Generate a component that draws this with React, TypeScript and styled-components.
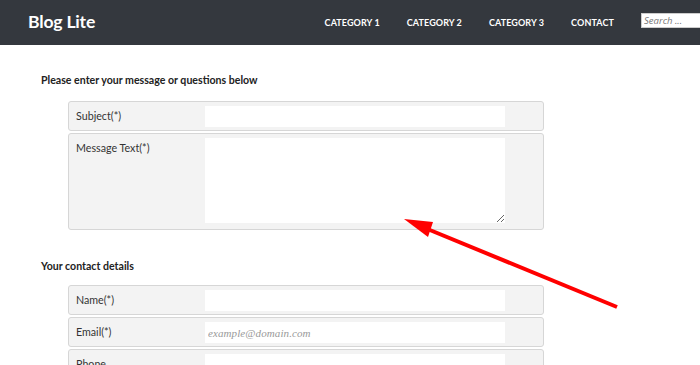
import React from "react";
import styled, { createGlobalStyle } from "styled-components";

const Global = createGlobalStyle`
  html, body { margin: 0; padding: 0; background: #fff; }
  body { font-family: Lato, "Open Sans", Arial, sans-serif; overflow: hidden; }
  * { box-sizing: border-box; }
`;

const Page = styled.div`
  position: relative;
  width: 700px;
  height: 365px;
  overflow: hidden;
`;

const Header = styled.header`
  height: 45px;
  background: #34383e;
  display: flex;
  align-items: center;
  padding-left: 28px;
  overflow: hidden;
`;

const Logo = styled.div`
  color: #fff;
  font-family: Lato, sans-serif;
  font-weight: 700;
  font-size: 17.6px;
  letter-spacing: -0.2px;
  margin-top: -2px;
  flex: 1;
`;

const Nav = styled.nav`
  display: flex;
  gap: 27px;
  margin-right: 27px;
`;

const NavItem = styled.a`
  color: #fff;
  font-family: Lato, sans-serif;
  font-weight: 700;
  font-size: 9px;
  text-transform: uppercase;
  text-decoration: none;
  letter-spacing: 0.1px;
`;

const Search = styled.input`
  width: 80px;
  height: 15px;
  margin-top: -4px;
  margin-right: -21px;
  border: 1px solid #ccc;
  background: #fff;
  padding: 0 2px;
  font-family: "Open Sans", sans-serif;
  font-size: 9.5px;
  font-style: italic;
  flex: none;
  &::placeholder { color: #777; }
`;

const Main = styled.main`
  padding: 28px 0 0 41px;
`;

const SectionTitle = styled.h3<{ $top?: number; $bottom?: number }>`
  margin: ${(p) => p.$top ?? 0}px 0 ${(p) => p.$bottom ?? 14}px 0;
  font-family: Lato, sans-serif;
  font-weight: 700;
  font-size: 10.6px;
  line-height: 14px;
  color: #222;
`;

const Rows = styled.div`
  margin-left: 27px;
  width: 476px;
  display: flex;
  flex-direction: column;
  gap: 2px;
`;

const Row = styled.div<{ $bottom?: number }>`
  display: flex;
  align-items: flex-start;
  background: #f3f3f3;
  border: 1px solid #d6d6d6;
  border-radius: 3px;
  padding: 4px 38px ${(p) => p.$bottom ?? 3}px 7px;
`;

const Label = styled.label`
  width: 129px;
  flex: none;
  font-family: Lato, sans-serif;
  font-size: 10.7px;
  line-height: 20px;
  color: #333;
`;

const Input = styled.input`
  width: 300px;
  height: 21px;
  border: none;
  background: #fff;
  padding: 0 3px;
  outline: none;
  font-family: "Liberation Serif", serif;
  font-style: italic;
  font-size: 11px;
  letter-spacing: 0.1px;
  &::placeholder { color: #999; }
`;

const TextArea = styled.textarea`
  width: 300px;
  height: 85px;
  border: none;
  background: #fff;
  padding: 0;
  outline: none;
  display: block;
`;

const Arrow = styled.svg`
  position: absolute;
  left: 0;
  top: 0;
  pointer-events: none;
`;

export default function App() {
  return (
    <Page>
      <Global />
      <Header>
        <Logo>Blog Lite</Logo>
        <Nav>
          <NavItem>Category 1</NavItem>
          <NavItem>Category 2</NavItem>
          <NavItem>Category 3</NavItem>
          <NavItem>Contact</NavItem>
        </Nav>
        <Search placeholder="Search ..." />
      </Header>
      <Main>
        <SectionTitle>Please enter your message or questions below</SectionTitle>
        <Rows>
          <Row>
            <Label>Subject(*)</Label>
            <Input />
          </Row>
          <Row $bottom={6}>
            <Label>Message Text(*)</Label>
            <TextArea />
          </Row>
        </Rows>
        <SectionTitle $top={29} $bottom={12}>Your contact details</SectionTitle>
        <Rows>
          <Row>
            <Label>Name(*)</Label>
            <Input />
          </Row>
          <Row>
            <Label>Email(*)</Label>
            <Input placeholder="example@domain.com" />
          </Row>
          <Row>
            <Label>Phone</Label>
            <Input />
          </Row>
        </Rows>
      </Main>
      <Arrow width="700" height="365" viewBox="0 0 700 365">
        <line x1="617" y1="307" x2="425" y2="228" stroke="#ff0000" strokeWidth="4" />
        <polygon points="404,219 433,222 428,237" fill="#ff0000" />
      </Arrow>
    </Page>
  );
}
